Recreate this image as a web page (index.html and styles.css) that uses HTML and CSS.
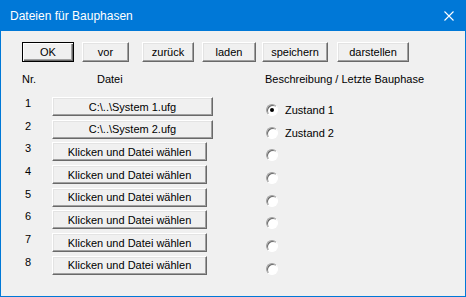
FILE: index.html
```html
<!DOCTYPE html>
<html lang="de">
<head>
  <meta charset="UTF-8" />
  <title>Dateien für Bauphasen</title>
  <link rel="stylesheet" href="styles.css">
</head>
<body>
  <div class="window">
    <div class="titlebar">
      <span class="title">Dateien für Bauphasen</span>
      <svg class="close" width="10" height="10" viewBox="0 0 10 10" aria-label="Schließen">
        <path d="M0.5 0.5 L9.5 9.5 M9.5 0.5 L0.5 9.5" stroke="#fff" stroke-width="1.1" fill="none" />
      </svg>
    </div>

    <div class="content">
      <div class="toolbar">
        <button class="btn btn-default tb-ok">OK</button>
        <button class="btn tb-vor">vor</button>
        <button class="btn tb-zurueck">zurück</button>
        <button class="btn tb-laden">laden</button>
        <button class="btn tb-speichern">speichern</button>
        <button class="btn tb-darstellen">darstellen</button>
      </div>

      <div class="head">
        <span class="col-nr">Nr.</span>
        <span class="col-file">Datei</span>
        <span class="col-desc">Beschreibung / Letzte Bauphase</span>
      </div>

      <div id="rows"></div>
    </div>
  </div>

  <script>
    const phasen = [
      { datei: 'C:\\..\\System 1.ufg', name: 'Zustand 1', checked: true },
      { datei: 'C:\\..\\System 2.ufg', name: 'Zustand 2' },
      {}, {}, {}, {}, {}, {}
    ];

    const rows = document.getElementById('rows');

    phasen.forEach((p, i) => {
      const row = document.createElement('div');
      row.className = 'row';

      const nr = document.createElement('span');
      nr.className = 'nr';
      nr.textContent = i + 1;

      const cell = document.createElement('div');
      cell.className = 'file-cell';
      const btn = document.createElement('button');
      btn.className = 'btn file-btn' + (p.datei ? ' file-set' : '');
      btn.textContent = p.datei || 'Klicken und Datei wählen';
      cell.appendChild(btn);

      const opt = document.createElement('label');
      opt.className = 'opt';
      const radio = document.createElement('span');
      radio.className = 'radio' + (p.checked ? ' checked' : '');
      opt.appendChild(radio);
      if (p.name) {
        const txt = document.createElement('span');
        txt.textContent = p.name;
        opt.appendChild(txt);
      }

      row.append(nr, cell, opt);
      rows.appendChild(row);
    });
  </script>
</body>
</html>
```

FILE: styles.css
```css
:root {
  --blue: #0078d7;
  --face: #f0f0f0;
  --shadow: #a0a0a0;
  --dark: #696969;
  --font: "Liberation Sans", Arial, sans-serif;
}

* {
  box-sizing: border-box;
}

body {
  margin: 0;
  font-family: var(--font);
  font-size: 11px;
  color: #000;
  background: #fff;
}

.window {
  width: 466px;
  height: 297px;
  border: 1px solid var(--blue);
  border-top: none;
  background: var(--face);
}

.titlebar {
  height: 31px;
  background: var(--blue);
  color: #fff;
  display: flex;
  align-items: center;
  justify-content: space-between;
  padding: 0 10px 0 9px;
}

.title {
  font-size: 12px;
}

.close {
  display: block;
  margin-right: 1px;
}

.content {
  padding: 11px 0 0 21px;
}

/* knoppen in klassieke Windows-stijl */
.btn {
  font-family: var(--font);
  font-size: 11px;
  color: #000;
  background: var(--face);
  height: 20px;
  padding: 0;
  border: 1px solid;
  border-color: #fff var(--dark) var(--dark) #fff;
  box-shadow: inset -1px -1px 0 var(--shadow), inset 1px 1px 0 #e3e3e3;
  border-radius: 0;
  cursor: pointer;
}

.btn-default {
  outline: 1px solid #000;
  outline-offset: -1px;
  box-shadow: inset 1px 1px 0 #fff, inset -1px -1px 0 var(--dark), inset -2px -2px 0 var(--shadow);
}

.toolbar {
  display: flex;
}

.tb-ok { width: 52px; }
.tb-vor { width: 47px; margin-left: 8px; }
.tb-zurueck { width: 52px; margin-left: 13px; }
.tb-laden { width: 54px; margin-left: 8px; }
.tb-speichern { width: 66px; margin-left: 6px; }
.tb-darstellen { width: 72px; margin-left: 9px; }

.head {
  display: flex;
  margin-top: 11px;
  height: 13px;
  line-height: 13px;
}

.col-nr { width: 75px; }
.col-file { width: 168px; }

#rows {
  margin-top: 11px;
}

.row {
  display: flex;
  align-items: flex-start;
  height: 22.7px;
}

.nr {
  width: 30px;
  padding-left: 3px;
  line-height: 13px;
  margin-top: 0;
}

.file-cell {
  width: 161px;
}

.file-btn {
  width: 155px;
  height: 19px;
}

.file-btn.file-set {
  width: 161px;
}

.opt {
  display: flex;
  align-items: center;
  gap: 7px;
  margin-left: 53px;
  margin-top: 7px;
  height: 12px;
  line-height: 12px;
}

.radio {
  width: 12px;
  height: 12px;
  border-radius: 50%;
  background: #fff;
  border: 1px solid;
  border-color: var(--shadow) #fff #fff var(--shadow);
  box-shadow: inset 1px 1px 0 var(--dark);
  display: flex;
  align-items: center;
  justify-content: center;
}

.radio.checked::after {
  content: "";
  width: 4px;
  height: 4px;
  border-radius: 50%;
  background: #000;
}
```
